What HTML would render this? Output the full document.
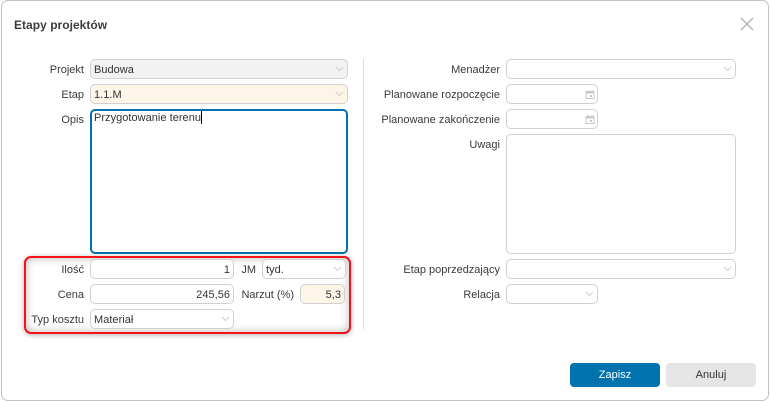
<!DOCTYPE html>
<html lang="pl"><head><meta charset="utf-8"><title>Etapy projektów</title>
<style>
html,body{margin:0;padding:0;background:#fff}
#p{position:relative;width:770px;height:401px;overflow:hidden;background:#fff;font:11px/20px "Liberation Sans",sans-serif;color:#333;letter-spacing:.03px}
#p div,#p svg{position:absolute;box-sizing:border-box}
.dlg{left:1px;top:0;width:768px;height:401px;border:1px solid #c2c2c2;border-radius:7px}
.l{text-align:right;white-space:nowrap;height:20px;color:#3a3a3a;margin-top:1px;letter-spacing:0}
.f{height:20px;border:1px solid #d0d0d0;border-radius:5px;background:#fff;padding:0 3px;white-space:nowrap;color:#333}
.g{background:#f2f2f2}.y{background:#fdf5e8}.r{text-align:right}
.c{width:9px;height:6px}
</style></head><body><div id="p">
<div class="dlg"></div>
<div style="left:14px;top:15px;font-size:12px;font-weight:bold;color:#3c3c3c;white-space:nowrap">Etapy projektów</div>
<svg style="left:740px;top:17px" width="14" height="14" viewBox="0 0 14 14"><path d="M1 1L13 13M13 1L1 13" stroke="#b0b0b0" stroke-width="1.3" fill="none"/></svg>

<div class="l" style="left:20px;width:64px;top:59px">Projekt</div>
<div class="f g" style="left:90px;top:59px;width:258px">Budowa</div>
<div class="l" style="left:20px;width:64px;top:84px">Etap</div>
<div class="f y" style="left:90px;top:84px;width:258px">1.1.M</div>
<div class="l" style="left:20px;width:64px;top:109px">Opis</div>
<div style="left:90px;top:109px;width:258px;height:145px;border:2px solid #0073ae;border-radius:5px;padding:0 2px;line-height:14px;color:#333;background:#fff">Przygotowanie terenu<span style="display:inline-block;width:1px;height:13px;background:#000;vertical-align:-3px"></span></div>

<div style="left:24px;top:256px;width:327px;height:78px;border:2px solid #f5121b;border-radius:7px;background:#fff;box-shadow:0 1px 6px rgba(0,0,0,.3),inset 0 0 9px rgba(0,0,0,.28)"></div>
<div class="l" style="left:20px;width:64px;top:259px">Ilość</div>
<div class="f r" style="left:90px;top:259px;width:144px">1</div>
<div class="l" style="left:236px;width:20px;top:259px">JM</div>
<div class="f" style="left:262px;top:259px;width:84px">tyd.</div>
<div class="l" style="left:20px;width:64px;top:284px">Cena</div>
<div class="f r" style="left:90px;top:284px;width:144px">245,56</div>
<div class="l" style="left:238px;width:56px;top:284px">Narzut (%)</div>
<div class="f y r" style="left:300px;top:284px;width:45px">5,3</div>
<div class="l" style="left:20px;width:64px;top:309px">Typ kosztu</div>
<div class="f" style="left:90px;top:309px;width:144px">Materiał</div>

<div style="left:363px;top:59px;width:1px;height:270px;background:#dedede"></div>

<div class="l" style="left:370px;width:130px;top:59px">Menadżer</div>
<div class="f" style="left:506px;top:59px;width:230px"></div>
<div class="l" style="left:370px;width:130px;top:84px">Planowane rozpoczęcie</div>
<div class="f" style="left:506px;top:84px;width:92px"></div>
<div class="l" style="left:370px;width:130px;top:109px">Planowane zakończenie</div>
<div class="f" style="left:506px;top:109px;width:92px"></div>
<div class="l" style="left:370px;width:130px;top:134px">Uwagi</div>
<div class="f" style="left:506px;top:134px;width:230px;height:120px"></div>
<div class="l" style="left:370px;width:130px;top:259px">Etap poprzedzający</div>
<div class="f" style="left:506px;top:259px;width:230px"></div>
<div class="l" style="left:370px;width:130px;top:284px">Relacja</div>
<div class="f" style="left:506px;top:284px;width:92px"></div>

<svg class="c" style="left:335px;top:66px" viewBox="0 0 9 6"><path d="M1 1L4.5 4.5L8 1" stroke="#cfcfcf" fill="none"/></svg>
<svg class="c" style="left:335px;top:91px" viewBox="0 0 9 6"><path d="M1 1L4.5 4.5L8 1" stroke="#cfcfcf" fill="none"/></svg>
<svg class="c" style="left:333px;top:266px" viewBox="0 0 9 6"><path d="M1 1L4.5 4.5L8 1" stroke="#cfcfcf" fill="none"/></svg>
<svg class="c" style="left:221px;top:316px" viewBox="0 0 9 6"><path d="M1 1L4.5 4.5L8 1" stroke="#cfcfcf" fill="none"/></svg>
<svg class="c" style="left:723px;top:66px" viewBox="0 0 9 6"><path d="M1 1L4.5 4.5L8 1" stroke="#cfcfcf" fill="none"/></svg>
<svg class="c" style="left:723px;top:266px" viewBox="0 0 9 6"><path d="M1 1L4.5 4.5L8 1" stroke="#cfcfcf" fill="none"/></svg>
<svg class="c" style="left:585px;top:291px" viewBox="0 0 9 6"><path d="M1 1L4.5 4.5L8 1" stroke="#cfcfcf" fill="none"/></svg>

<svg style="left:585px;top:89px" width="10" height="10" viewBox="0 0 10 10"><path d="M1 2.5H9V9.5H1ZM3 1V2.5M7 1V2.5" stroke="#c8c8c8" fill="none"/><path d="M1 3H9V4.5H1Z" fill="#c8c8c8"/><rect x="5" y="6" width="2" height="2" fill="#c8c8c8"/></svg>
<svg style="left:585px;top:114px" width="10" height="10" viewBox="0 0 10 10"><path d="M1 2.5H9V9.5H1ZM3 1V2.5M7 1V2.5" stroke="#c8c8c8" fill="none"/><path d="M1 3H9V4.5H1Z" fill="#c8c8c8"/><rect x="5" y="6" width="2" height="2" fill="#c8c8c8"/></svg>

<div style="left:570px;top:363px;width:90px;height:24px;background:#0073ae;border-radius:4px;color:#fff;text-align:center;line-height:24px;font-weight:500">Zapisz</div>
<div style="left:666px;top:363px;width:90px;height:24px;background:#e5e5e5;border-radius:4px;color:#333;text-align:center;line-height:24px">Anuluj</div>
</div></body></html>
